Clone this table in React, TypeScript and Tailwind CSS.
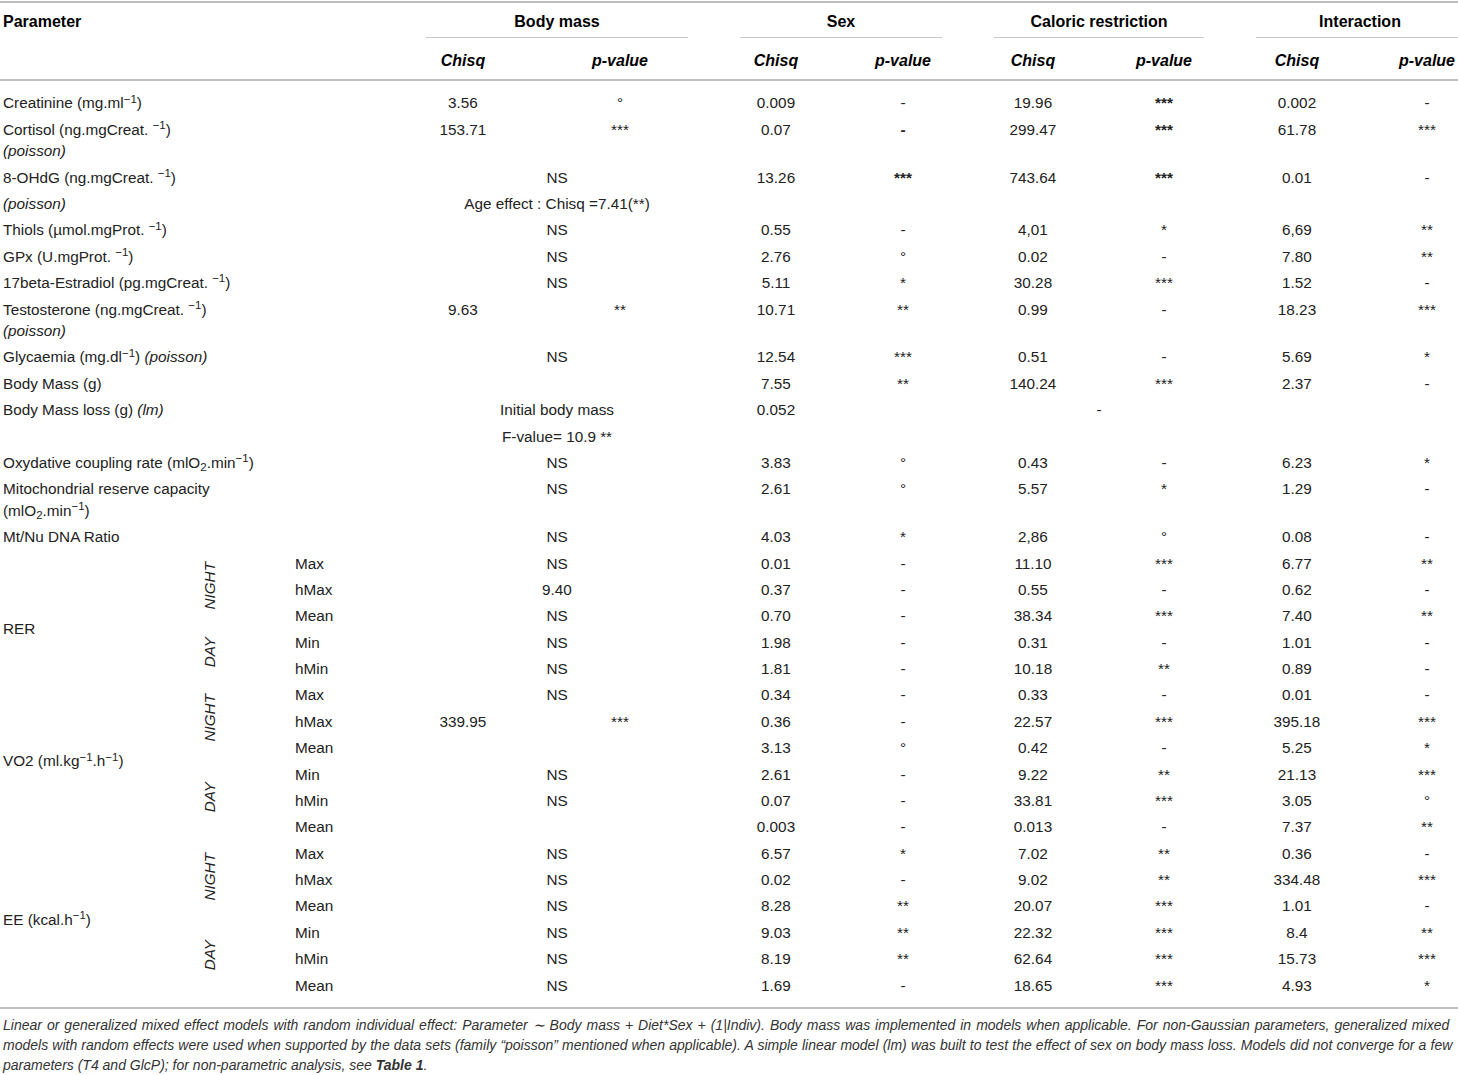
import type { ReactNode } from 'react';

type Cell = string | { t: ReactNode; span?: number; bold?: boolean };

const NS = (t: ReactNode = 'NS'): Cell => ({ t, span: 2 });
const B = (t: string): Cell => ({ t, bold: true });

const cellBase = 'px-0 py-[2.45px] align-top text-center leading-[21.5px] whitespace-nowrap';

function ValueCells({ cells }: { cells: Cell[] }) {
  return (
    <>
      {cells.map((c, i) => {
        if (typeof c === 'string') {
          return (
            <td key={i} className={cellBase}>
              {c}
            </td>
          );
        }
        return (
          <td key={i} colSpan={c.span ?? 1} className={`${cellBase} ${c.bold ? 'font-bold' : ''}`}>
            {c.t}
          </td>
        );
      })}
    </>
  );
}

const unit = () => (
  <>
    {' '}
    <sup>−1</sup>)
  </>
);

const simpleRows: { label: ReactNode; cells: Cell[] }[] = [
  { label: <>Creatinine (mg.ml<sup>−1</sup>)</>, cells: ['3.56', '°', '0.009', '-', '19.96', B('***'), '0.002', '-'] },
  {
    label: (
      <>
        Cortisol (ng.mgCreat.{unit()}
        <br />
        <i>(poisson)</i>
      </>
    ),
    cells: ['153.71', '***', '0.07', B('-'), '299.47', B('***'), '61.78', '***'],
  },
  { label: <>8-OHdG (ng.mgCreat.{unit()}</>, cells: [NS(), '13.26', B('***'), '743.64', B('***'), '0.01', '-'] },
  { label: <i>(poisson)</i>, cells: [NS('Age effect : Chisq =7.41(**)'), '', '', '', '', '', ''] },
  { label: <>Thiols (µmol.mgProt.{unit()}</>, cells: [NS(), '0.55', '-', '4,01', '*', '6,69', '**'] },
  { label: <>GPx (U.mgProt.{unit()}</>, cells: [NS(), '2.76', '°', '0.02', '-', '7.80', '**'] },
  { label: <>17beta-Estradiol (pg.mgCreat.{unit()}</>, cells: [NS(), '5.11', '*', '30.28', '***', '1.52', '-'] },
  {
    label: (
      <>
        Testosterone (ng.mgCreat.{unit()}
        <br />
        <i>(poisson)</i>
      </>
    ),
    cells: ['9.63', '**', '10.71', '**', '0.99', '-', '18.23', '***'],
  },
  {
    label: (
      <>
        Glycaemia (mg.dl<sup>−1</sup>) <i>(poisson)</i>
      </>
    ),
    cells: [NS(), '12.54', '***', '0.51', '-', '5.69', '*'],
  },
  { label: 'Body Mass (g)', cells: [NS(''), '7.55', '**', '140.24', '***', '2.37', '-'] },
  {
    label: (
      <>
        Body Mass loss (g) <i>(lm)</i>
      </>
    ),
    cells: [NS('Initial body mass'), '0.052', '', NS('-'), '', ''],
  },
  { label: '', cells: [NS('F-value= 10.9 **'), '', '', '', '', '', ''] },
  {
    label: (
      <>
        Oxydative coupling rate (mlO<sub>2</sub>.min<sup>−1</sup>)
      </>
    ),
    cells: [NS(), '3.83', '°', '0.43', '-', '6.23', '*'],
  },
  {
    label: (
      <>
        Mitochondrial reserve capacity
        <br />
        (mlO<sub>2</sub>.min<sup>−1</sup>)
      </>
    ),
    cells: [NS(), '2.61', '°', '5.57', '*', '1.29', '-'],
  },
  { label: 'Mt/Nu DNA Ratio', cells: [NS(), '4.03', '*', '2,86', '°', '0.08', '-'] },
];

type Block = {
  label: ReactNode;
  shift?: boolean;
  groups: { name: string; rows: { sub: string; cells: Cell[] }[] }[];
};

const blocks: Block[] = [
  {
    label: 'RER',
    shift: true,
    groups: [
      {
        name: 'NIGHT',
        rows: [
          { sub: 'Max', cells: [NS(), '0.01', '-', '11.10', '***', '6.77', '**'] },
          { sub: 'hMax', cells: [NS('9.40'), '0.37', '-', '0.55', '-', '0.62', '-'] },
          { sub: 'Mean', cells: [NS(), '0.70', '-', '38.34', '***', '7.40', '**'] },
        ],
      },
      {
        name: 'DAY',
        rows: [
          { sub: 'Min', cells: [NS(), '1.98', '-', '0.31', '-', '1.01', '-'] },
          { sub: 'hMin', cells: [NS(), '1.81', '-', '10.18', '**', '0.89', '-'] },
        ],
      },
    ],
  },
  {
    label: (
      <>
        VO2 (ml.kg<sup>−1</sup>.h<sup>−1</sup>)
      </>
    ),
    groups: [
      {
        name: 'NIGHT',
        rows: [
          { sub: 'Max', cells: [NS(), '0.34', '-', '0.33', '-', '0.01', '-'] },
          { sub: 'hMax', cells: ['339.95', '***', '0.36', '-', '22.57', '***', '395.18', '***'] },
          { sub: 'Mean', cells: [NS(''), '3.13', '°', '0.42', '-', '5.25', '*'] },
        ],
      },
      {
        name: 'DAY',
        rows: [
          { sub: 'Min', cells: [NS(), '2.61', '-', '9.22', '**', '21.13', '***'] },
          { sub: 'hMin', cells: [NS(), '0.07', '-', '33.81', '***', '3.05', '°'] },
          { sub: 'Mean', cells: [NS(''), '0.003', '-', '0.013', '-', '7.37', '**'] },
        ],
      },
    ],
  },
  {
    label: (
      <>
        EE (kcal.h<sup>−1</sup>)
      </>
    ),
    groups: [
      {
        name: 'NIGHT',
        rows: [
          { sub: 'Max', cells: [NS(), '6.57', '*', '7.02', '**', '0.36', '-'] },
          { sub: 'hMax', cells: [NS(), '0.02', '-', '9.02', '**', '334.48', '***'] },
          { sub: 'Mean', cells: [NS(), '8.28', '**', '20.07', '***', '1.01', '-'] },
        ],
      },
      {
        name: 'DAY',
        rows: [
          { sub: 'Min', cells: [NS(), '9.03', '**', '22.32', '***', '8.4', '**'] },
          { sub: 'hMin', cells: [NS(), '8.19', '**', '62.64', '***', '15.73', '***'] },
          { sub: 'Mean', cells: [NS(), '1.69', '-', '18.65', '***', '4.93', '*'] },
        ],
      },
    ],
  },
];

const groups = ['Body mass', 'Sex', 'Caloric restriction', 'Interaction'];
const colWidths = [180, 60, 160, 126, 188, 124, 130, 130, 132, 134, 126];

export default function App() {
  return (
    <div className="w-[1458px] overflow-hidden bg-white font-['Liberation_Sans',Arial,sans-serif] text-[15.3px] text-[#222]">
      <div className="mt-[1px] border-t-2 border-[#bdbdbd]">
        <table className="w-[1490px] table-fixed border-collapse">
          <colgroup>
            {colWidths.map((w, i) => (
              <col key={i} style={{ width: w }} />
            ))}
          </colgroup>
          <thead className="text-[16px]">
            <tr>
              <th colSpan={3} rowSpan={2} className="pl-[3px] pt-[8px] text-left align-top leading-[21px] font-bold text-black">
                Parameter
              </th>
              {groups.map((g) => (
                <th key={g} colSpan={2} className="px-0 pt-[8px] pb-0 font-bold text-black">
                  <div className="mx-[26px] border-b border-[#c8c8c8] pb-[5px] leading-[21px]">{g}</div>
                </th>
              ))}
            </tr>
            <tr>
              {groups.map((g) => (
                <>
                  <th key={g + 'c'} className="pt-[12px] pb-[8px] leading-[21px] font-bold italic text-black">
                    Chisq
                  </th>
                  <th key={g + 'p'} className="pt-[12px] pb-[8px] leading-[21px] font-bold italic text-black">
                    p-value
                  </th>
                </>
              ))}
            </tr>
            <tr>
              <th colSpan={11} className="h-0 border-b-2 border-[#bdbdbd] p-0" />
            </tr>
          </thead>
          <tbody>
            <tr>
              <td colSpan={11} className="h-[10px] p-0" />
            </tr>
            {simpleRows.map((r, i) => (
              <tr key={i}>
                <td colSpan={3} className={`${cellBase} pl-[3px] text-left`}>
                  {r.label}
                </td>
                <ValueCells cells={r.cells} />
              </tr>
            ))}
            {blocks.map((b, bi) => {
              const total = b.groups.reduce((n, g) => n + g.rows.length, 0);
              return b.groups.map((g, gi) =>
                g.rows.map((row, ri) => (
                  <tr key={`${bi}-${gi}-${ri}`}>
                    {gi === 0 && ri === 0 && (
                      <td rowSpan={total} className={`pl-[3px] text-left align-middle leading-[21.5px] ${b.shift ? 'pt-[26px]' : ''}`}>
                        {b.label}
                      </td>
                    )}
                    {ri === 0 && (
                      <td rowSpan={g.rows.length} className="p-0 text-center align-middle">
                        <span className="inline-block rotate-180 italic leading-[18px] [writing-mode:vertical-rl]">{g.name}</span>
                      </td>
                    )}
                    <td className={`${cellBase} pl-[55px] text-left`}>{row.sub}</td>
                    <ValueCells cells={row.cells} />
                  </tr>
                )),
              );
            })}
            <tr>
              <td colSpan={11} className="h-[8px] p-0" />
            </tr>
          </tbody>
        </table>
      </div>
      <div className="border-t-2 border-[#bdbdbd] pl-[3px] pt-[6px] text-[14px] italic leading-[20px] text-[#333] whitespace-nowrap">
        <div className="[word-spacing:1.1px]">
          Linear or generalized mixed effect models with random individual effect: Parameter ∼ Body mass + Diet*Sex + (1|Indiv). Body mass was implemented in models when applicable. For non-Gaussian parameters, generalized mixed
        </div>
        <div className="[word-spacing:0.25px]">
          models with random effects were used when supported by the data sets (family “poisson” mentioned when applicable). A simple linear model (lm) was built to test the effect of sex on body mass loss. Models did not converge for a few
        </div>
        <div>
          parameters (T4 and GlcP); for non-parametric analysis, see <b>Table 1</b>.
        </div>
      </div>
    </div>
  );
}
